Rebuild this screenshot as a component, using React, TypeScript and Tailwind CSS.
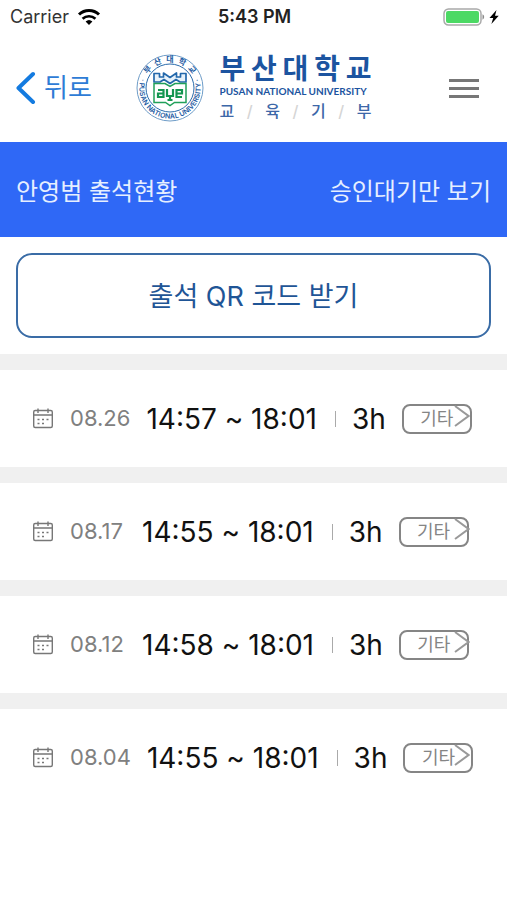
import React from "react";

type Entry = { date: string; start: string; end: string; hours: string; kind: string };

const entries: Entry[] = [
  { date: "08.26", start: "14:57", end: "18:01", hours: "3h", kind: "기타" },
  { date: "08.17", start: "14:55", end: "18:01", hours: "3h", kind: "기타" },
  { date: "08.12", start: "14:58", end: "18:01", hours: "3h", kind: "기타" },
  { date: "08.04", start: "14:55", end: "18:01", hours: "3h", kind: "기타" },
];

function StatusBar() {
  return (
    <div className="grid h-[34px] grid-cols-3 items-center pr-2 pl-2.5">
      <div className="flex items-center gap-2 text-lg text-[#333]">
        <span>Carrier</span>
        <svg viewBox="0 0 24 18" className="h-[18px] w-6" aria-label="Wi-Fi">
          <path d="M2 6.500a14.500 14.500 0 0 1 20 0" fill="none" stroke="#000" strokeWidth="3" />
          <path d="M5.6 10.8a9.2 9.2 0 0 1 12.8 0" fill="none" stroke="#000" strokeWidth="2.6" />
          <path d="M8.6 13.6a5 5 0 0 1 6.800 0L12 17Z" fill="#000" />
        </svg>
      </div>
      <div className="text-center text-lg font-semibold whitespace-nowrap text-[#222]">5:43 PM</div>
      <div className="flex items-center justify-end gap-1">
        <svg viewBox="0 0 42 18" className="h-[18px] w-[42px]" aria-label="Battery">
          <rect x="1" y="1" width="37" height="16" rx="4.5" fill="#fff" stroke="#a9a9a9" strokeWidth="1.5" />
          <rect x="3" y="3" width="33" height="12" rx="2" fill="#4cd964" />
          <path d="M39.500 6.3a3 3 0 0 1 0 5.4Z" fill="#8a8a8a" />
        </svg>
        <svg viewBox="0 0 10 14" className="h-3.5 w-2.5" aria-label="Charging">
          <path d="M7.5 0 .5 8h3.7L2.4 14 9.7 5.8H6Z" fill="#000" />
        </svg>
      </div>
    </div>
  );
}

function Emblem() {
  return (
    <svg viewBox="0 0 68 68" className="size-[68px] shrink-0" aria-label="부산대학교">
      <defs>
        <path id="ring-top" d="M8 34a26 26 0 0 1 52 0" />
        <path id="ring-bottom" d="M7.500 18.500A30.700 30.700 0 1 0 60.500 18.500" />
      </defs>
      <circle cx="34" cy="34" r="33" fill="#fff" stroke="#6f9dc8" strokeWidth="1" />
      <circle cx="34" cy="34" r="24" fill="#fff" stroke="#2b6cac" strokeWidth="1" />
      <text fill="#1d5ca3" fontSize="8" fontWeight="700" textAnchor="middle">
        <textPath href="#ring-top" startOffset="50%">{"부\u2002산\u2002대\u2002학\u2002교"}</textPath>
      </text>
      <text fill="#1d5ca3" fontSize="7" fontWeight="600" textAnchor="middle">
        <textPath href="#ring-bottom" startOffset="50%">· PUSAN NATIONAL UNIVERSITY ·</textPath>
      </text>
      <path
        d="M18 28v-8.500h5.500v3.500h4v-4l6.500 4.500 6.500-4.500v4h4v-3.500H50V28h-6l-4-2.500-6 4-6-4-4 2.500Z"
        fill="#e7f2fa"
        stroke="#2368ab"
        strokeWidth="1.700"
        strokeLinejoin="round"
      />
      <path d="M18 29.500h11l5 3 5-3h11v19H38.500L34 51.500l-4.500-3H18Z" fill="#fff" stroke="#21a05a" strokeWidth="1.500" />
      <g fill="none" stroke="#159650" strokeWidth="2.200">
        <path d="M22 36h5.500v7H22v-3.500h5.500" />
        <path d="M31 35v7h6v-7M34 42v4M31.500 46h5" />
        <path d="M46 43h-5.500v-7H46v3.500h-5.500" />
      </g>
    </svg>
  );
}

function Header() {
  return (
    <header className="grid h-[108px] grid-cols-[1fr_auto_1fr] items-center px-4">
      <button type="button" className="flex items-center gap-2 justify-self-start text-[26px] leading-9 text-[#2e7cd6]">
        <svg viewBox="0 0 20 34" className="h-[34px] w-5" aria-hidden="true">
          <path d="M17 3 2.500 17 17 31" fill="none" stroke="#147be0" strokeWidth="4" strokeLinecap="round" strokeLinejoin="round" />
        </svg>
        뒤로
      </button>
      <div className="flex items-center gap-4">
        <Emblem />
        <div className="flex w-[152px] flex-col text-[#1c54a0]">
          <div className="flex justify-between pt-0.5 text-[28px] leading-8 font-bold">
            {["부", "산", "대", "학", "교"].map((c) => (
              <span key={c}>{c}</span>
            ))}
          </div>
          <div className="font-[Lato] text-[10px] leading-3 font-bold whitespace-nowrap">PUSAN NATIONAL UNIVERSITY</div>
          <div className="flex justify-between text-base leading-7 font-medium text-[#3d67a8]">
            <span>교</span>
            <span className="text-[#d5d5d5]">/</span>
            <span>육</span>
            <span className="text-[#d5d5d5]">/</span>
            <span>기</span>
            <span className="text-[#d5d5d5]">/</span>
            <span>부</span>
          </div>
        </div>
      </div>
      <button type="button" aria-label="메뉴" className="mr-3 flex w-[30px] flex-col gap-[5px] justify-self-end">
        <span className="h-[3px] bg-[#777]" />
        <span className="h-[3px] bg-[#777]" />
        <span className="h-[3px] bg-[#777]" />
      </button>
    </header>
  );
}

function CalendarIcon() {
  return (
    <svg viewBox="0 0 22 22" className="size-[22px] shrink-0" fill="none" stroke="#777" strokeWidth="1.400" aria-hidden="true">
      <rect x="1.700" y="2.500" width="18.600" height="17" rx="1.500" />
      <path d="M1.700 7h18.600M6 .5V5M16 .5V5" />
      <path d="M5.500 11.500h2M10 11.500h2M14.500 11.500h2M5.500 15.500h2M10 15.500h2" strokeWidth="1.700" />
    </svg>
  );
}

function Row({ entry }: { entry: Entry }) {
  return (
    <li className="relative flex h-[97px] items-center bg-white pl-8 whitespace-nowrap">
      <CalendarIcon />
      <span className="ml-4 min-w-14 text-[22px] text-[#808080]">{entry.date}</span>
      <span className="ml-4 text-[28px] text-[#111]">
        {entry.start} <span className="[font-feature-settings:'calt'_0]">~</span> {entry.end}
      </span>
      <span className="ml-[18px] h-4 w-px bg-[#aaa]" />
      <span className="ml-4 text-[28px] text-[#111]">{entry.hours}</span>
      <button
        type="button"
        className="ml-4 flex h-[30px] w-[70px] items-center justify-center rounded-lg border-2 border-[#858585] text-lg leading-6 text-[#858585]"
      >
        {entry.kind}
      </button>
      <svg
        viewBox="0 0 16 24"
        className="absolute top-[34px] right-[37px] h-6 w-4"
        fill="none"
        stroke="#999"
        strokeWidth="2"
        aria-hidden="true"
      >
        <path d="m1 2 13.500 10L1 22" />
      </svg>
    </li>
  );
}

export default function App() {
  return (
    <div className="min-h-screen bg-white font-[Inter,'Noto_Sans_CJK_KR',sans-serif]">
      <StatusBar />
      <Header />
      <main>
        <div className="flex h-[95px] items-center justify-between bg-[#2f68f6] px-4 pt-1 text-2xl text-[#e6efff]">
          <h1>안영범 출석현황</h1>
          <button type="button">승인대기만 보기</button>
        </div>
        <div className="px-4 pt-4 pb-4">
          <button
            type="button"
            className="h-[85px] w-full rounded-2xl border-2 border-[#3a6ca6] pt-1 text-[27px] text-[#1f5596]"
          >
            출석 QR 코드 받기
          </button>
        </div>
        <ul className="flex flex-col gap-4 bg-[#f0f0f0] pt-4">
          {entries.map((entry) => (
            <Row key={entry.date} entry={entry} />
          ))}
        </ul>
      </main>
    </div>
  );
}
